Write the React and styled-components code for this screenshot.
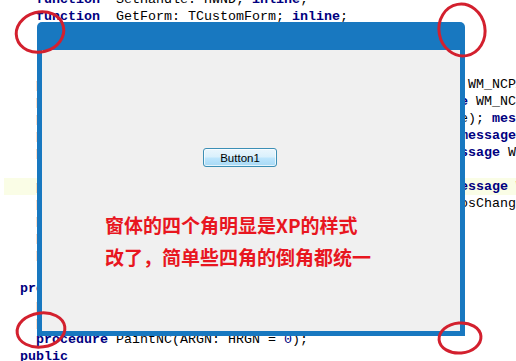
import React from "react";
import styled, { createGlobalStyle } from "styled-components";

const GlobalStyle = createGlobalStyle`
  html, body {
    margin: 0;
    padding: 0;
    background: #fff;
    overflow: hidden;
  }
`;

const K = (text) => ({ text, kind: "kw" });
const T = (text) => ({ text, kind: "id" });
const N = (text) => ({ text, kind: "num" });

// Delphi class declaration sitting behind the form window
const codeLines = [
  [T("  "), K("function"), T("  SetHandle: HWND; "), K("inline"), T(";")],
  [T("  "), K("function"), T("  GetForm: TCustomForm; "), K("inline"), T(";")],
  [],
  [T("    { non-client area }")],
  [],
  [T("  "), K("procedure"), T(" WMNCPaint(var Message: TWMNCPaint); "), K("message"), T(" WM_NCPAINT;")],
  [T("  "), K("procedure"), T(" WMNCHitTest(var Msg: TWMNCHitTest);  "), K("message"), T(" WM_NCHITTEST;")],
  [T("  "), K("procedure"), T(" WMNCLButtonDown(var Message: TWMNCHitMessage); "), K("message"), T(" WM_NCLBUTTONDOWN;")],
  [T("  "), K("procedure"), T(" WMNCMouseMove(var Msg: TWMNCHitMessage);   "), K("message"), T(" WM_NCMOUSEMOVE;")],
  [T("  "), K("procedure"), T(" WMNCMouseLeave(var Message: TMessage);   "), K("message"), T(" WM_NCMOUSELEAVE;")],
  [],
  [T("  "), K("procedure"), T(" WMEraseBkgnd(var Message: TWMEraseBkgnd); "), K("message"), T(" WM_ERASEBKGND;")],
  [T("  "), K("procedure"), T(" WMWindowPosChanging(var Message: TWMWindowPosChanging); "), K("message"), T(" WM_WINDOWPOSCHANGING;")],
  [T("  "), K("procedure"), T(" CreateWnd; "), K("override"), T(";")],
  [T("  "), K("procedure"), T(" DoNCPaint(DC: HDC);")],
  [T("  "), K("procedure"), T(" DrawCaption(DC: HDC; R: TRect);")],
  [],
  [K("protected")],
  [T("  "), K("procedure"), T(" WndProc(var Message: TMessage); "), K("override"), T(";")],
  [T("  "), K("procedure"), T(" Loaded; "), K("override"), T(";")],
  [T("  "), K("procedure"), T(" PaintNC(ARGN: HRGN = "), N("0"), T(");")],
  [K("public")],
];

const HIGHLIGHT_LINE = 11;

export default function App() {
  return (
    <>
      <GlobalStyle />
      <Page>
        <Editor>
          {codeLines.map((parts, i) => (
            <CodeLine key={i} $current={i === HIGHLIGHT_LINE}>
              {parts.map((p, j) => (
                <Token key={j} $kind={p.kind}>
                  {p.text}
                </Token>
              ))}
            </CodeLine>
          ))}
        </Editor>

        <FormWindow>
          <TitleBar />
          <ClientArea>
            <Button1>Button1</Button1>
            <Note>
              <div>窗体的四个角明显是XP的样式</div>
              <div>改了，简单些四角的倒角都统一</div>
            </Note>
          </ClientArea>
        </FormWindow>

        <Marks width="516" height="361" viewBox="0 0 516 361">
          <ellipse cx="40" cy="32" rx="24" ry="20" transform="rotate(-15 40 32)" />
          <ellipse cx="462" cy="30" rx="23" ry="26" transform="rotate(-10 462 30)" />
          <ellipse cx="41" cy="330" rx="24" ry="17" transform="rotate(-8 41 330)" />
          <ellipse cx="460" cy="338" rx="21" ry="15" transform="rotate(-5 460 338)" />
        </Marks>
      </Page>
    </>
  );
}

const Page = styled.div`
  position: relative;
  width: 516px;
  height: 361px;
  overflow: hidden;
  background: #fff;
`;

const Editor = styled.div`
  display: flex;
  flex-direction: column;
  margin-top: -9px;
  font-family: "Liberation Mono", "Courier New", monospace;
  font-size: 13.333px;
  line-height: 17px;
  white-space: pre;
`;

const CodeLine = styled.div`
  height: 17px;
  margin-left: 4px;
  padding-left: 16px;
  background: ${(p) => (p.$current ? "#fafde6" : "transparent")};
`;

const Token = styled.span`
  color: ${(p) => (p.$kind === "kw" || p.$kind === "num" ? "#000080" : "#000")};
  font-weight: ${(p) => (p.$kind === "kw" ? 700 : 400)};
`;

const FormWindow = styled.div`
  position: absolute;
  left: 37px;
  top: 22px;
  width: 428px;
  height: 314px;
  display: flex;
  flex-direction: column;
  background: #1878c0;
  border-radius: 5px 5px 0 0;
`;

const TitleBar = styled.div`
  height: 28px;
  flex: none;
`;

const ClientArea = styled.div`
  flex: 1;
  margin: 0 5px 5px;
  background: #f0f0f0;
  display: flex;
  flex-direction: column;
  align-items: flex-start;
`;

const Button1 = styled.button`
  margin: 98px 0 0 161px;
  width: 74px;
  height: 19px;
  padding: 0;
  border: 1px solid #3c8fb5;
  border-radius: 3px;
  box-shadow: inset 0 0 0 1px rgba(255, 255, 255, 0.7);
  background: linear-gradient(#eaf6fd 0%, #d9f0fc 48%, #bee6fd 52%, #a7d9f5 100%);
  font-family: "Liberation Sans", Arial, sans-serif;
  font-size: 11.5px;
  color: #000;
`;

const Note = styled.div`
  margin: 42px 0 0 63px;
  font-family: "Noto Sans CJK SC", sans-serif;
  font-weight: 700;
  font-size: 19px;
  line-height: 32px;
  color: #e8161f;
`;

const Marks = styled.svg`
  position: absolute;
  left: 0;
  top: 0;
  pointer-events: none;

  ellipse {
    fill: none;
    stroke: #d3202e;
    stroke-width: 3;
  }
`;
